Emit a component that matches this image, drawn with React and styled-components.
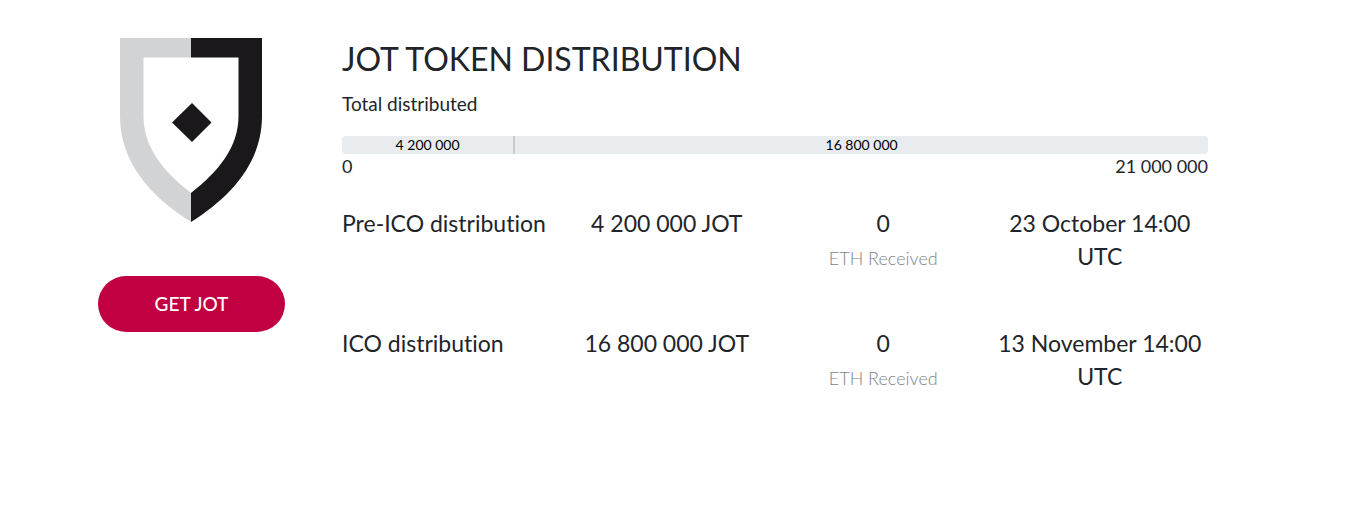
import React from 'react'
import styled, {createGlobalStyle} from 'styled-components'

const TOTAL = 21000000

const stages = [
  {name: 'Pre-ICO distribution', tokens: 4200000, eth: 0, date: '23 October 14:00 UTC'},
  {name: 'ICO distribution', tokens: 16800000, eth: 0, date: '13 November 14:00 UTC'},
]

const format = n => String(n).replace(/\B(?=(\d{3})+$)/g, ' ')

const Shield = () => (
  <Logo viewBox="0 0 143 184" role="img" aria-label="JOT">
    <path fill="#d1d3d4" d="M71 0H0V78C0 124 30 158 71 184V155C43 133 23.500 109 23.500 78V19.500H71Z" />
    <path fill="#1a181b" d="M71 0H142V78C142 124 112 158 71 184V155C99 133 118.500 109 118.500 78V19.500H71Z" />
    <path fill="#1a181b" d="M72 65L91.500 84.500L72 104L52 84.500Z" />
  </Logo>
)

const App = () => {
  return (
    <>
      <GlobalStyle />
      <Page>
        <Side>
          <Shield />
          <GetButton type="button">GET JOT</GetButton>
        </Side>
        <Content>
          <Title>JOT TOKEN DISTRIBUTION</Title>
          <Subtitle>Total distributed</Subtitle>
          <Bar>
            {stages.map(stage => (
              <Segment key={stage.name} style={{width: `${stage.tokens / TOTAL * 100}%`}}>
                {format(stage.tokens)}
              </Segment>
            ))}
          </Bar>
          <Scale>
            <span>0</span>
            <span>{format(TOTAL)}</span>
          </Scale>
          <Stages>
            <tbody>
              {stages.map(stage => (
                <tr key={stage.name}>
                  <StageName scope="row">{stage.name}</StageName>
                  <Cell>{format(stage.tokens)} JOT</Cell>
                  <Cell>
                    {stage.eth}
                    <Note>ETH Received</Note>
                  </Cell>
                  <Cell>{stage.date}</Cell>
                </tr>
              ))}
            </tbody>
          </Stages>
        </Content>
      </Page>
    </>
  )
}

const GlobalStyle = createGlobalStyle`
  *{
    box-sizing:border-box;
  }
  body{
    margin:0;
    background:#fff;
    color:#212529;
    font-family:Lato, "Open Sans", sans-serif;
    font-size:18px;
    line-height:24px;
    font-variant-ligatures:none;
  }
`
const Page=styled.main`
  display:flex;
  gap:57px;
  padding:38px 148px 38px 98px;
`
const Side=styled.div`
  flex:none;
  width:187px;
  display:flex;
  flex-direction:column;
  align-items:center;
  gap:54px;
`
const Logo=styled.svg`
  display:block;
  width:143px;
  height:184px;
`
const GetButton=styled.button`
  width:100%;
  height:56px;
  padding:0 0 2px;
  border:0;
  border-radius:28px;
  background:#c10041;
  color:#fff;
  font-family:inherit;
  font-size:19px;
  font-weight:500;
  cursor:pointer;
`
const Content=styled.section`
  flex:1;
  min-width:0;
`
const Title=styled.h1`
  margin:0;
  font-size:32px;
  font-weight:400;
  line-height:42px;
`
const Subtitle=styled.p`
  margin:12px 0 20px;
  font-size:19px;
`
const Bar=styled.div`
  display:flex;
  height:18px;
  border-radius:4px;
  overflow:hidden;
  background:#e9ecef;
`
const Segment=styled.div`
  color:#000;
  font-size:14px;
  line-height:18px;
  text-align:center;
  &:not(:last-child){
    border-right:2px solid #c8cbce;
  }
`
const Scale=styled.div`
  display:flex;
  justify-content:space-between;
`
const Stages=styled.table`
  width:100%;
  margin-top:29px;
  border-collapse:collapse;
  table-layout:fixed;
  font-size:23px;
  line-height:33px;
  tr{
    height:120px;
  }
`
const StageName=styled.th`
  padding:0;
  font-weight:400;
  text-align:left;
  vertical-align:top;
  white-space:nowrap;
`
const Cell=styled.td`
  padding:0;
  text-align:center;
  vertical-align:top;
`
const Note=styled.div`
  color:#7c848c;
  font-size:18px;
  font-weight:300;
  line-height:37px;
`
export default App
